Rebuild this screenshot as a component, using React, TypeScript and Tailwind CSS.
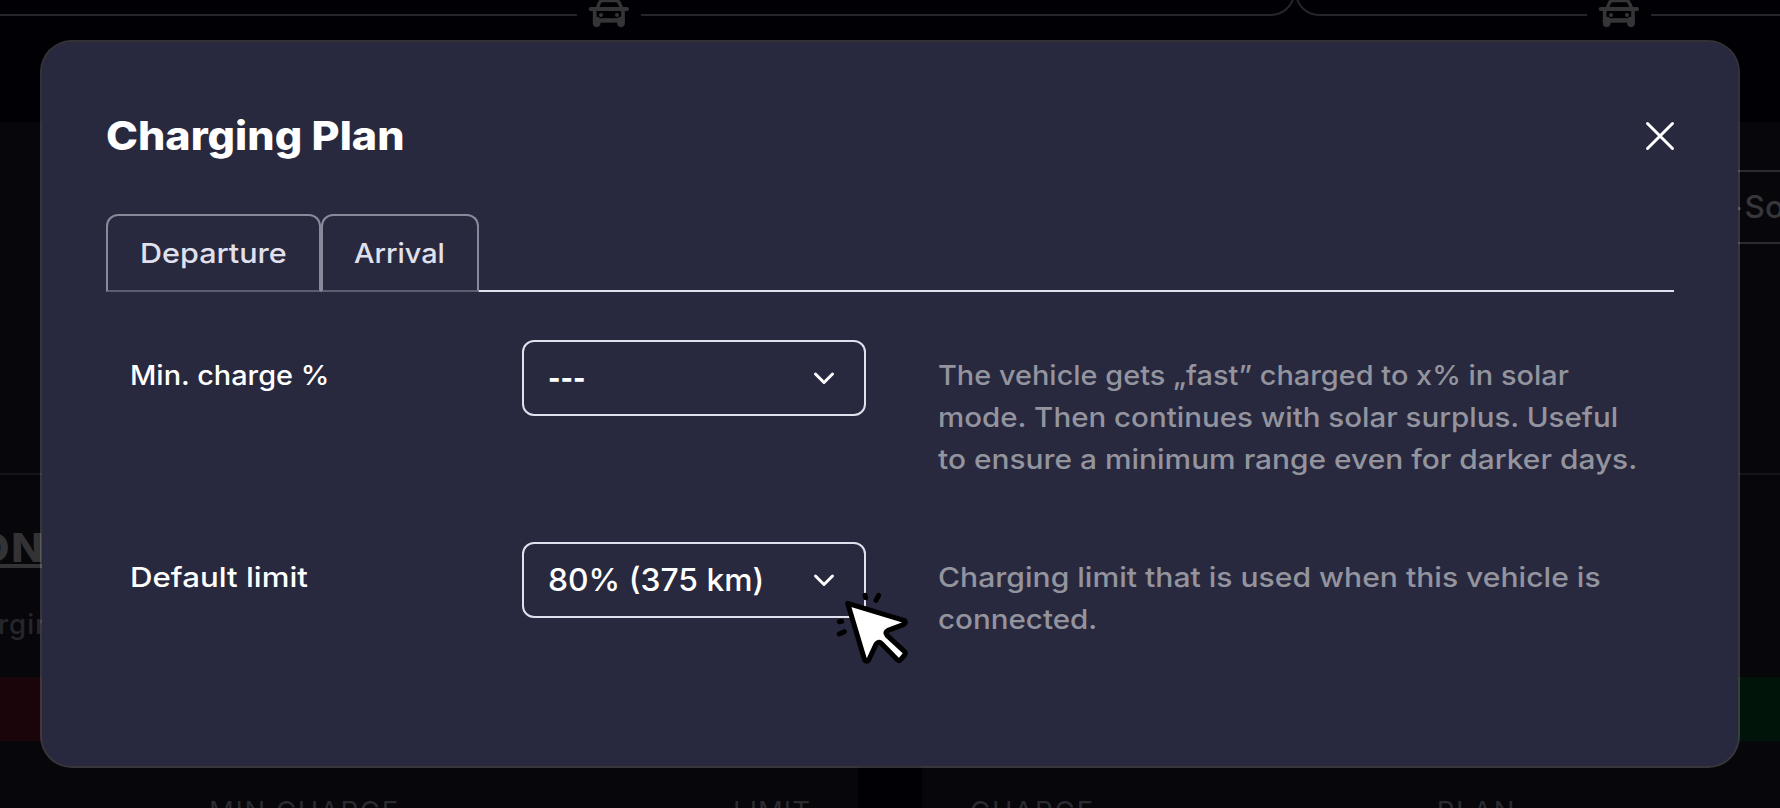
import type { ReactNode } from "react";

function CarIcon() {
  return (
    <svg width="80" height="33" viewBox="0 0 240 99" fill="none" stroke="#353538" className="ml-[2px] shrink-0">
      <path d="M81 27 88 9Q91 2 99 2H137Q145 2 148 9L156 27" strokeWidth="10" />
      <path d="M62 27H171" strokeWidth="12" strokeLinecap="round" />
      <path d="M74 27V60H159V27" strokeWidth="11" />
      <path d="M74 62H159" strokeWidth="12" />
      <path d="M80 62V70M153 62V70" strokeWidth="23" strokeLinecap="round" />
      <circle cx="93" cy="45" r="6" fill="#353538" stroke="none" />
      <circle cx="141" cy="45" r="6" fill="#353538" stroke="none" />
    </svg>
  );
}

function CursorIcon() {
  return (
    <svg
      width="84"
      height="90"
      viewBox="0 0 252 270"
      fill="none"
      stroke="#000"
      strokeLinejoin="round"
      strokeLinecap="round"
      className="absolute left-[310px] top-[38px] z-10"
    >
      <path
        d="M47 70 218 122Q223 128 216 133L168 151Q157 157 165 166L218 215Q222 220 218 225L206 239Q201 244 196 239L149 191Q140 182 132 193L110 240Q104 248 98 240Z"
        fill="#fff"
        strokeWidth="15"
      />
      <path d="M99 46 101 53M140 46 132 61M22 125 29 124M22 162 37 155" strokeWidth="15" />
    </svg>
  );
}

function Tab({ children, className, textClass }: { children: ReactNode; className: string; textClass: string }) {
  return (
    <button
      className={`flex h-[78px] items-start rounded-t-xl border-2 border-[#88899a] border-b-[#5c5d70] pt-4 text-[27.5px] leading-[42px] font-medium text-[#e0e1ed] ${className}`}
    >
      <span className={`origin-left ${textClass}`}>{children}</span>
    </button>
  );
}

function Select({ children, className }: { children: ReactNode; className: string }) {
  return (
    <div className="flex h-[76px] items-center justify-between rounded-xl border-2 border-[#e0e1ed] pr-7 pl-6">
      <span className={`origin-left text-[31px] leading-[72px] text-white ${className}`}>{children}</span>
      <svg width="24" height="16" viewBox="0 0 24 16" fill="none" stroke="#fff" strokeWidth="3" strokeLinecap="round" strokeLinejoin="round">
        <path d="M3.5 4 12 12.5 20.5 4" />
      </svg>
    </div>
  );
}

function Row({ label, control, labelClass, children }: { label: string; control: ReactNode; labelClass: string; children: ReactNode }) {
  return (
    <div className="flex h-[202px] items-start pl-6">
      <div className="w-[392px] pt-[14px] text-[27.5px] leading-[42px] font-medium text-white">
        <span className={`inline-block origin-left ${labelClass}`}>{label}</span>
      </div>
      <div className="relative w-[344px]">{control}</div>
      <div className="ml-[71.5px] pt-[14px] text-[27.5px] leading-[42px] font-medium whitespace-nowrap text-[#93949e]">{children}</div>
    </div>
  );
}

function Backdrop() {
  return (
    <div className="flex h-[808px] flex-col overflow-hidden bg-[#000005]">
      <div className="relative flex h-[122px] shrink-0 items-start">
        <div className="-mt-6 h-10 w-[1295px] shrink-0 rounded-br-3xl border-r-2 border-b-2 border-[#262629]" />
        <div className="-mt-6 h-10 flex-1 rounded-bl-3xl border-b-2 border-l-2 border-[#262629]" />
        <div className="absolute top-0 left-[577px] flex w-16 justify-center bg-[#000005]">
          <CarIcon />
        </div>
        <div className="absolute top-0 left-[1587px] flex w-16 justify-center bg-[#000005]">
          <CarIcon />
        </div>
      </div>
      <div className="flex flex-1 gap-16">
        <div className="flex w-[858px] flex-col bg-[#06060b]">
          <div className="mt-[351px] h-[2px] bg-[#151519]" />
          <div className="-ml-[23px] flex h-[202px] flex-col items-start pt-[43px]">
            <span className="origin-left scale-x-[1.08] text-[39px] leading-[60px] font-extrabold tracking-[1.5px] text-[#333336] underline decoration-[4px] underline-offset-[2px]">ON</span>
            <span className="mt-[25px] ml-[21px] text-[27.5px] leading-[42px] font-medium tracking-[1px] text-[#26262b]">rgin</span>
          </div>
          <div className="h-16 bg-[#1a050a]" />
          <div className="mt-[49px] flex justify-between pr-[47px] pl-[209px] text-[27.5px] leading-[42px] text-[#2a2a2f]">
            <span className="tracking-[1.6px]">MIN CHARGE</span>
            <span className="tracking-[1px]">LIMIT</span>
          </div>
        </div>
        <div className="flex w-[858px] flex-col bg-[#06060b]">
          <div className="mt-12 ml-8 flex h-[74px] items-center justify-end border-y-2 border-[#2b2b30]">
            <span className="-mr-[42px] text-[31.5px] font-medium text-[#36363b]">
              <span className="mr-px">+</span>Solar
            </span>
          </div>
          <div className="mt-[229px] h-[2px] bg-[#151519]" />
          <div className="mt-[202px] h-16 bg-[#00140a]" />
          <div className="mt-[49px] flex justify-between pr-[264px] pl-[48px] text-[27.5px] leading-[42px] text-[#2a2a2f]">
            <span className="tracking-[1.8px]">CHARGE</span>
            <span className="tracking-[1.6px]">PLAN</span>
          </div>
        </div>
      </div>
    </div>
  );
}

export default function App() {
  return (
    <div className="relative h-[808px] w-[1780px] overflow-hidden font-['Inter',sans-serif]">
      <Backdrop />
      <div className="absolute inset-0 flex p-10">
        <div className="flex flex-1 flex-col rounded-[32px] border-2 border-white/20 bg-[#28293e] bg-clip-padding px-16 pt-[66px]">
          <div className="flex h-14 items-center justify-between">
            <h1 className="origin-left scale-x-[1.09] text-[39.5px] leading-[56px] font-extrabold text-white">Charging Plan</h1>
            <svg width="30" height="30" viewBox="0 0 30 30" stroke="#fff" strokeWidth="3" strokeLinecap="round" className="-mr-px">
              <path d="M2.5 2.5 27.5 27.5M27.5 2.5 2.5 27.5" />
            </svg>
          </div>
          <div className="mt-[50px] flex h-[78px] shrink-0">
            <Tab className="w-[215px] pl-8" textClass="scale-x-[1.11]">Departure</Tab>
            <Tab className="w-[158px] pl-[31px]" textClass="scale-x-[1.05]">Arrival</Tab>
            <div className="flex-1 border-b-2 border-[#e0e1ed]" />
          </div>
          <div className="mt-12 flex flex-col">
            <Row
              label="Min. charge %"
              labelClass="scale-x-[1.05]"
              control={<Select className="scale-x-[0.86] font-bold">---</Select>}
            >
              <p className="origin-left scale-x-[1.051]">The vehicle gets „fast” charged to x% in solar</p>
              <p className="origin-left scale-x-[1.073]">mode. Then continues with solar surplus. Useful</p>
              <p className="origin-left scale-x-[1.087]">to ensure a minimum range even for darker days.</p>
            </Row>
            <Row
              label="Default limit"
              labelClass="scale-x-[1.135]"
              control={
                <>
                  <Select className="scale-x-[1.027] font-medium">80% (375 km)</Select>
                  <CursorIcon />
                </>
              }
            >
              <p className="origin-left scale-x-[1.094]">Charging limit that is used when this vehicle is</p>
              <p className="origin-left scale-x-[1.075]">connected.</p>
            </Row>
          </div>
        </div>
      </div>
    </div>
  );
}
